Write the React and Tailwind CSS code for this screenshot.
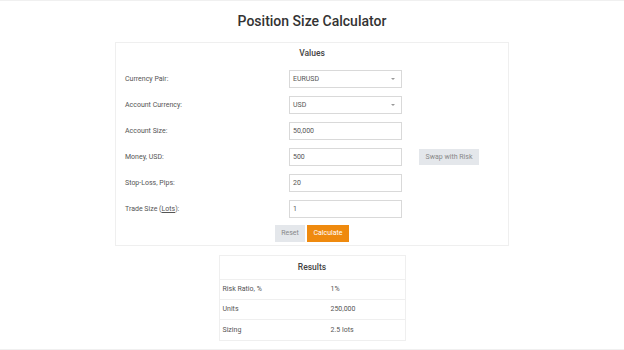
import React from "react";

function Row({ label, children, extra }) {
  return (
    <div className="flex h-[26px] items-center">
      <div className="w-[173px] pl-[9px] text-[7px] text-[#555]">{label}</div>
      <div className="w-[113px]">{children}</div>
      {extra ? <div className="ml-[17px]">{extra}</div> : null}
    </div>
  );
}

function Input({ value }) {
  return (
    <div className="flex h-[18px] w-[113px] items-center border border-[#d9d9d9] bg-white px-[3px] text-[7px] text-[#555]">
      {value}
    </div>
  );
}

function Select({ value }) {
  return (
    <div className="flex h-[18px] w-[113px] items-center justify-between border border-[#d9d9d9] bg-white pl-[3px] pr-[6px] text-[7px] text-[#555]">
      <span>{value}</span>
      <span className="h-0 w-0 border-x-[2.5px] border-t-[2.5px] border-x-transparent border-t-[#999]" />
    </div>
  );
}

export default function App() {
  return (
    <div
      className="h-[350px] w-[624px] border-y border-[#f0f0f0] bg-white antialiased"
      style={{ fontFamily: "Roboto, 'Liberation Sans', sans-serif" }}
    >
      <div className="flex h-[41px] items-start justify-center pt-[10px]">
        <h1 className="text-[14px] font-medium leading-[20px] text-[#333]">Position Size Calculator</h1>
      </div>
      <div className="mx-auto w-[394px] border border-[#efefef]">
        <div className="flex h-[23px] items-center justify-center pb-[2px] text-[8.5px] font-medium text-[#444]">
          Values
        </div>
        <Row label="Currency Pair:">
          <Select value="EURUSD" />
        </Row>
        <Row label="Account Currency:">
          <Select value="USD" />
        </Row>
        <Row label="Account Size:">
          <Input value="50,000" />
        </Row>
        <Row
          label="Money, USD:"
          extra={
            <div className="flex h-[16px] w-[60px] items-center justify-center bg-[#e4e7eb] text-[7px] text-[#888]">
              Swap with Risk
            </div>
          }
        >
          <Input value="500" />
        </Row>
        <Row label="Stop-Loss, Pips:">
          <Input value="20" />
        </Row>
        <Row
          label={
            <span>
              Trade Size (<span className="underline">Lots</span>):
            </span>
          }
        >
          <Input value="1" />
        </Row>
        <div className="mt-[3px] mb-[3px] flex justify-center gap-[2px]">
          <div className="flex h-[17px] w-[30px] items-center justify-center bg-[#e4e7eb] text-[7px] text-[#888]">
            Reset
          </div>
          <div className="flex h-[17px] w-[42px] items-center justify-center bg-[#ef8a0e] text-[7px] text-white">
            Calculate
          </div>
        </div>
      </div>
      <div className="mx-auto mt-[9px] w-[187px] border border-[#efefef] text-[7px] text-[#555]">
        <div className="flex h-[24px] items-center justify-center border-b border-[#efefef] text-[8.5px] font-medium text-[#444]">
          Results
        </div>
        {[
          ["Risk Ratio, %", "1%"],
          ["Units", "250,000"],
          ["Sizing", "2.5 lots"],
        ].map(([a, b], i) => (
          <div
            key={a}
            className={`flex h-[20px] items-center ${i < 2 ? "border-b border-[#efefef]" : ""}`}
          >
            <div className="w-[111px] pl-[3px]">{a}</div>
            <div>{b}</div>
          </div>
        ))}
      </div>
    </div>
  );
}
